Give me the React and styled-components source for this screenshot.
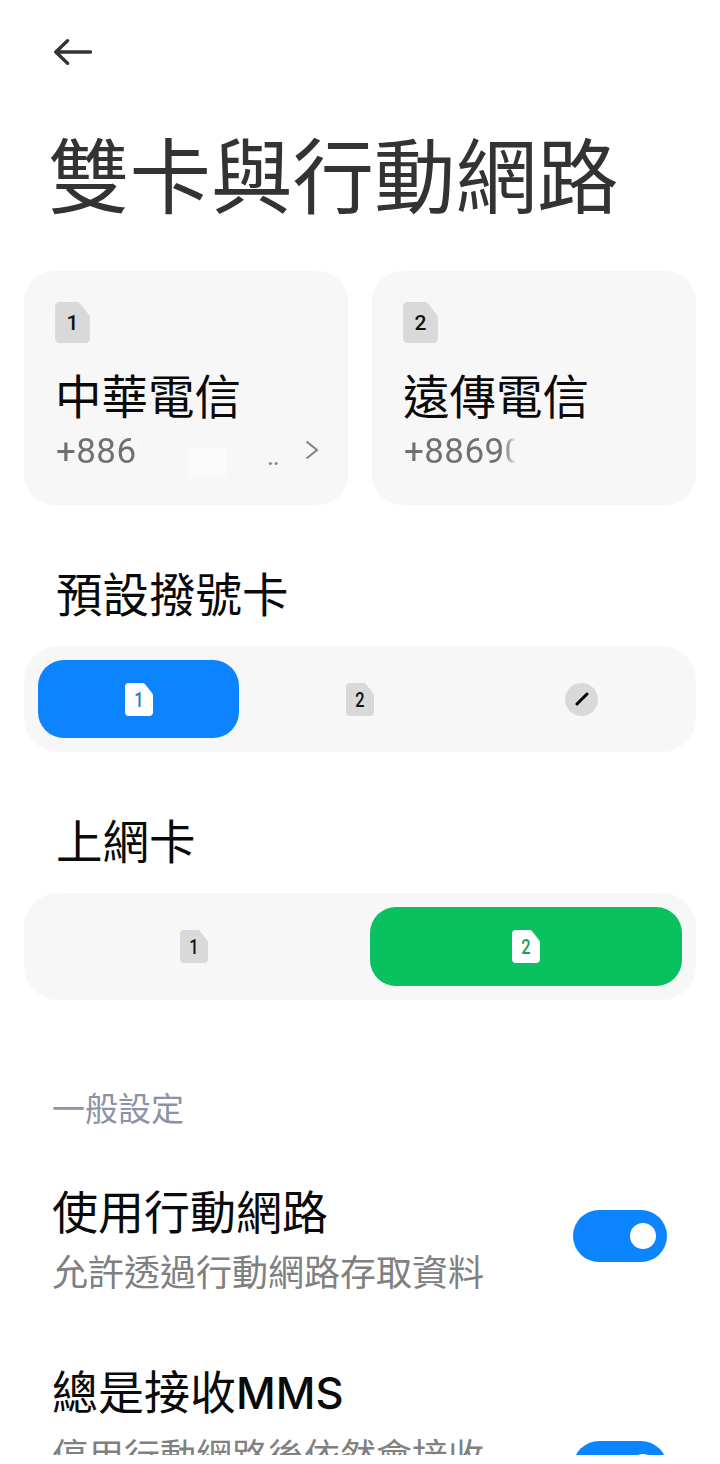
import React from 'react'
import styled, { createGlobalStyle } from 'styled-components'

const Global = createGlobalStyle`
  html, body { margin: 0; padding: 0; background: #fff; }
  body { font-family: Roboto, "Noto Sans CJK TC", sans-serif; }
`

const Page = styled.div`
  width: 720px;
  height: 1464px;
  overflow: hidden;
  background: #fff;
`

// the capture stops a little before the bottom of the window
const Screen = styled.div`
  height: 1455px;
  overflow: hidden;
`

const Header = styled.div`
  padding: 39px 0 0 54px;
  height: 26px;
  svg { display: block; }
`

const Title = styled.h1`
  margin: 46px 0 0 48px;
  font: 400 81.5px/120px "Noto Sans CJK TC", sans-serif;
  color: #333;
  white-space: nowrap;
`

const Cards = styled.div`
  display: grid;
  grid-template-columns: 324px 324px;
  gap: 24px;
  margin: 40px 24px 0;
`

const Card = styled.div`
  position: relative;
  height: 234px;
  box-sizing: border-box;
  padding: 31px 0 0 31px;
  background: #f7f7f7;
  border-radius: 30px;
  svg { display: block; }
`

const CardName = styled.div`
  margin: 23px 0 0 0;
  font: 400 46.5px/56px "Noto Sans CJK TC", sans-serif;
  color: #0a0a0a;
`

const PhoneRow = styled.div`
  display: flex;
  align-items: center;
  height: 40px;
  margin: 10px 0 0 1px;
`

const Phone = styled.span`
  font: 400 35px/40px Roboto, sans-serif;
  letter-spacing: 0.4px;
  background: ${({ $fade, $soft }) => `linear-gradient(90deg, #707070 ${$fade}px, #f7f7f7 ${$fade + $soft}px)`};
  -webkit-background-clip: text;
  background-clip: text;
  -webkit-text-fill-color: transparent;
`

const Dots = styled.span`
  margin-left: 111px;
  font: 700 20px/40px Roboto, sans-serif;
  color: #8a8a8a;
  transform: translateY(6px);
`

const Chevron = styled.svg`
  position: absolute;
  left: 281px;
  top: 169px;
`

const Patch = styled.div`
  position: absolute;
  left: 164px;
  top: 176px;
  width: 38px;
  height: 31px;
  background: #fafafa;
`

const SectionTitle = styled.h2`
  margin: ${({ $top }) => $top}px 0 ${({ $bottom }) => $bottom}px 56px;
  font: 400 46.5px/60px "Noto Sans CJK TC", sans-serif;
  color: #0a0a0a;
`

const Segments = styled.div`
  display: grid;
  grid-template-columns: repeat(${({ $cols }) => $cols}, 1fr);
  gap: 20.5px;
  height: ${({ $h }) => $h}px;
  box-sizing: border-box;
  margin: 0 24px;
  padding: 14px;
  background: #f7f7f7;
  border-radius: 34px;
`

const Segment = styled.div`
  display: flex;
  align-items: center;
  justify-content: center;
  border-radius: 26px;
  background: ${({ $color }) => $color || 'transparent'};
`

const PenBadge = styled.div`
  display: flex;
  align-items: center;
  justify-content: center;
  width: 33px;
  height: 33px;
  border-radius: 50%;
  background: #d9d9d9;
`

const GroupLabel = styled.div`
  margin: 83px 0 0 52px;
  font: 400 33px/48px "Noto Sans CJK TC", sans-serif;
  color: #8b93a7;
`

const Row = styled.div`
  display: flex;
  align-items: center;
  justify-content: space-between;
  padding: 0 53px 0 52px;
  margin-top: ${({ $top }) => $top}px;
`

const RowText = styled.div`
  padding-bottom: ${({ $more }) => $more || 0}px;
`

const RowTitle = styled.div`
  font: 400 46px/56px "Noto Sans CJK TC", sans-serif;
  color: #0a0a0a;
  white-space: nowrap;
  b {
    font: 500 43.5px/56px Inter, sans-serif;
  }
`

const RowSub = styled.div`
  margin-top: 7px;
  font: 400 36px/52px "Noto Sans CJK TC", sans-serif;
  color: #808080;
  white-space: nowrap;
`

const Toggle = styled.div`
  display: flex;
  align-items: center;
  justify-content: flex-end;
  width: 94px;
  height: 52px;
  margin-bottom: 5px;
  box-sizing: border-box;
  padding-right: 11px;
  border-radius: 26px;
  background: #0d84ff;
  &::after {
    content: '';
    width: 26px;
    height: 26px;
    border-radius: 50%;
    background: #fff;
  }
`

const Sim = ({ n, w = 28, h = 33, fill = '#d9d9d9', color = '#111', size = 20, squeeze = 0.82, y = 23.5 }) => (
  <svg width={w} height={h} viewBox="0 0 28 33">
    <path
      d="M3.5 0H17.6C18.6 0 19.5.5 20.1 1.3L27.2 10.3C27.7 11 28 11.8 28 12.6V29.5C28 31.4 26.4 33 24.5 33H3.5C1.6 33 0 31.4 0 29.5V3.5C0 1.6 1.6 0 3.5 0Z"
      fill={fill}
    />
    <text
      transform={`translate(14 ${y}) scale(${squeeze} 1)`}
      textAnchor="middle"
      fontFamily="Roboto, sans-serif"
      fontWeight="500"
      fontSize={size}
      fill={color}
    >
      {n}
    </text>
  </svg>
)

export default function App() {
  return (
    <Page>
      <Global />
      <Screen>
        <Header>
          <svg width="38" height="26" viewBox="0 0 38 26" fill="none" stroke="#333" strokeWidth="3.4" strokeLinecap="round" strokeLinejoin="round">
            <path d="M1.8 13H36.5M13.5 1.8L1.8 13L13.5 24.2" />
          </svg>
        </Header>
        <Title>雙卡與行動網路</Title>

        <Cards>
          <Card>
            <Sim n="1" w={35} h={41} size={17} squeeze={1} y={22.8} />
            <CardName>中華電信</CardName>
            <PhoneRow>
              <Phone $fade={78} $soft={5}>+8869</Phone>
              <Dots>..</Dots>
            </PhoneRow>
            <Patch />
            <Chevron width="14" height="20" viewBox="0 0 14 20" fill="none" stroke="#808080" strokeWidth="2">
              <path d="M1.5 1.5L12 10L1.5 18.5" />
            </Chevron>
          </Card>
          <Card>
            <Sim n="2" w={35} h={41} size={17} squeeze={1} y={22.8} />
            <CardName>遠傳電信</CardName>
            <PhoneRow>
              <Phone $fade={100} $soft={12}>+88690</Phone>
            </PhoneRow>
          </Card>
        </Cards>

        <SectionTitle $top={57} $bottom={24}>預設撥號卡</SectionTitle>
        <Segments $cols={3} $h={106}>
          <Segment $color="#0d84ff">
            <Sim n="1" fill="#fff" color="#2a78c8" />
          </Segment>
          <Segment>
            <Sim n="2" />
          </Segment>
          <Segment>
            <PenBadge>
              <svg width="14" height="14" viewBox="0 0 14 14" fill="none" stroke="#000" strokeWidth="3" strokeLinecap="round">
                <path d="M2 12L12 2" />
              </svg>
            </PenBadge>
          </Segment>
        </Segments>

        <SectionTitle $top={57} $bottom={24}>上網卡</SectionTitle>
        <Segments $cols={2} $h={107}>
          <Segment>
            <Sim n="1" />
          </Segment>
          <Segment $color="#0ac15f">
            <Sim n="2" fill="#fff" color="#1f9d60" />
          </Segment>
        </Segments>

        <GroupLabel>一般設定</GroupLabel>

        <Row $top={50}>
          <RowText>
            <RowTitle>使用行動網路</RowTitle>
            <RowSub>允許透過行動網路存取資料</RowSub>
          </RowText>
          <Toggle />
        </Row>
        <Row $top={65}>
          <RowText $more={98}>
            <RowTitle>總是接收<b>MMS</b></RowTitle>
            <RowSub>停用行動網路後依然會接收</RowSub>
          </RowText>
          <Toggle />
        </Row>
      </Screen>
    </Page>
  )
}
